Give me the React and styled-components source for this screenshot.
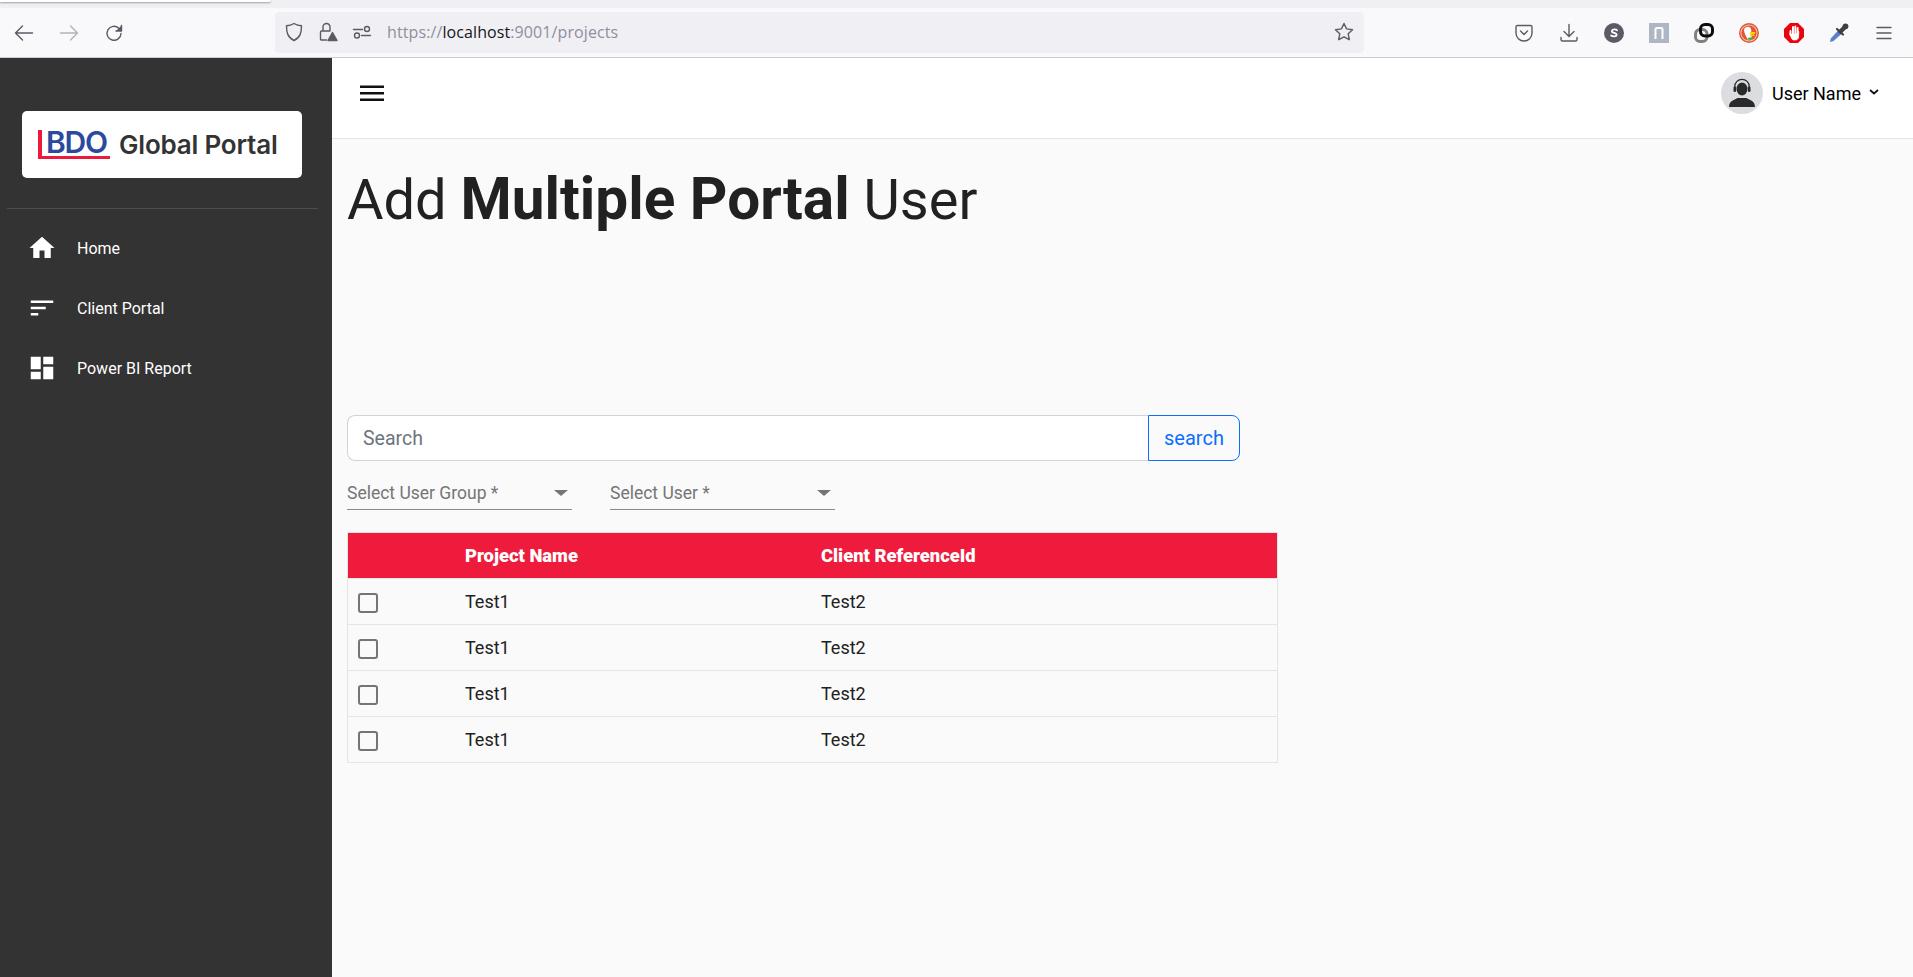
import React from 'react';
import styled, { createGlobalStyle } from 'styled-components';

const Global = createGlobalStyle`
  html, body { margin: 0; padding: 0; height: 100%; background: #fff; }
  body { font-family: Roboto, "Liberation Sans", sans-serif; }
  * { box-sizing: border-box; }
`;

const Page = styled.div`
  display: flex; flex-direction: column; width: 1913px; height: 977px; overflow: hidden;
`;

/* ---- browser chrome ---- */
const TabStrip = styled.div`
  height: 8px; background: #f0f0f4; flex: none;
`;
const TabSliver = styled.div`
  width: 271px; height: 2px; background: #fff; box-shadow: 0 1px 2px rgba(0,0,0,.35); border-bottom-right-radius: 3px;
`;
const Toolbar = styled.div`
  display: flex; align-items: center; height: 50px; flex: none; background: #f9f9fb;
  border-bottom: 1px solid #ccc;
`;
const NavButtons = styled.div`
  display: flex; align-items: center; gap: 25px; width: 275px; padding-left: 14px;
`;
const UrlBar = styled.div`
  display: flex; align-items: center; width: 1089px; height: 41px; background: #f0f0f4;
  border-radius: 4px; padding: 0 10px 0 9px; margin-top: -1px;
`;
const UrlIcons = styled.div`
  display: flex; align-items: center; gap: 14px; margin-right: 15px;
`;
const UrlText = styled.div`
  flex: 1; font-family: "Open Sans", "Noto Sans", sans-serif; font-size: 16px; letter-spacing: .1px; color: #8f8f9d;
`;
const Host = styled.span`color: #15141a;`;
const Extensions = styled.div`
  display: flex; align-items: center; gap: 25px; margin-left: 150px;
`;
const Glyph = styled.svg`
  display: block; flex: none; width: 20px; height: 20px;
  fill: none; stroke: ${p => p.$dim ? '#b3b3b8' : '#5b5b66'}; stroke-width: 1.4; stroke-linecap: round; stroke-linejoin: round;
`;

/* ---- app shell ---- */
const Shell = styled.div`
  flex: 1; display: flex; min-height: 0;
`;
const Sidebar = styled.aside`
  width: 332px; flex: none; background: #333; display: flex; flex-direction: column; padding: 53px 14px 0 7px;
`;
const LogoCard = styled.div`
  width: 280px; height: 67px; margin-left: 15px; background: #fff; border-radius: 5px;
  display: flex; align-items: center; padding-left: 16px; gap: 9px;
`;
const LogoMark = styled.div`
  height: 29px; width: 72px; padding-left: 4px; flex: none;
  font-family: Inter, "Liberation Sans", sans-serif; font-weight: 600; font-size: 30px; line-height: 25px; color: #2a4a9e; letter-spacing: -1.2px;
  border-left: 4px solid #ed1a3b; border-bottom: 3px solid #ed1a3b;
`;
const LogoText = styled.div`
  font-family: Inter, "Liberation Sans", sans-serif; font-weight: 600; font-size: 26px; color: #333; letter-spacing: -0.2px; white-space: nowrap;
`;
const Divider = styled.hr`
  margin: 30px 0 0; border: 0; border-top: 1px solid #4d4d4d;
`;
const Nav = styled.nav`
  display: flex; flex-direction: column; padding: 9px 0 0 20px;
`;
const NavItem = styled.a`
  display: flex; align-items: center; height: 60px; color: #fff; font-size: 16px; gap: 20px;
`;
const NavIcon = styled.svg`
  width: 30px; height: 30px; fill: #fff; flex: none;
`;
const Main = styled.main`
  flex: 1; display: flex; flex-direction: column; min-width: 0; background: #fafafa;
`;
const Topbar = styled.header`
  height: 81px; flex: none; background: #fff; border-bottom: 1px solid #e4e4e4;
  display: flex; align-items: center; justify-content: space-between; padding: 0 33px 10px 28px;
`;
const Burger = styled.svg`
  width: 24px; height: 24px; display: block;
`;
const UserBox = styled.div`
  display: flex; align-items: center; gap: 9px; font-size: 18px; color: #000;
`;
const Avatar = styled.div`
  width: 42px; height: 42px; border-radius: 50%; background: #dcdde0; overflow: hidden; display: flex; align-items: center; justify-content: center;
`;
const Chevron = styled.svg`
  width: 12px; height: 12px; margin: -3px 0 0 -2px;
`;
const Content = styled.div`
  flex: 1; padding: 26px 0 0 15px;
`;
const Title = styled.h1`
  margin: 0; font-size: 56px; font-weight: 400; line-height: 68px; color: #212121;
  b { font-weight: 700; font-size: 58.5px; }
`;
const SearchRow = styled.div`
  display: flex; width: 893px; height: 46px; margin-top: 181px;
`;
const SearchInput = styled.div`
  flex: 1; background: #fff; border: 1px solid #ced4da; border-right: 0; border-radius: 8px 0 0 8px;
  font-size: 19.5px; color: #6c757d; padding-left: 15px; display: flex; align-items: center;
`;
const SearchButton = styled.button`
  width: 92px; background: transparent; border: 1px solid #0d6efd; border-radius: 0 8px 8px 0;
  color: #0d6efd; font: 400 20px Roboto, sans-serif; padding: 0;
`;
const Filters = styled.div`
  display: flex; gap: 38px; margin-top: 13px;
`;
const SelectBox = styled.div`
  display: flex; align-items: center; justify-content: space-between; width: 225px; height: 36px;
  border-bottom: 1px solid #8a8a8a; font-size: 17.5px; color: #757575; padding: 3px 4px 0 0;
`;
const Caret = styled.span`
  width: 0; height: 0; border-left: 7px solid transparent; border-right: 7px solid transparent; border-top: 6px solid #757575;
`;
const Table = styled.div`
  width: 931px; margin-top: 22px; border: 1px solid #e5e5e5;
`;
const Row = styled.div`
  display: grid; grid-template-columns: 117px 356px 1fr; align-items: center; height: 46px; font-size: 18px; color: #212121;
  border-top: 1px solid #e5e5e5;
  &:first-child { border-top: 0; }
`;
const HeadRow = styled(Row)`
  height: 45px; background: #ef1b3c; color: #fff; font-weight: 900; font-size: 18.4px;
`;
const Check = styled.span`
  display: block; width: 20px; height: 20px; margin: 2px 0 0 10px; border: 2px solid #757575; border-radius: 3px;
`;

const items = [
  ['Home', 'M10 20v-6h4v6h5v-8h3L12 3 2 12h3v8z'],
  ['Client Portal', 'M3 18h6v-2H3v2zM3 6v2h18V6H3zm0 7h12v-2H3v2z'],
  ['Power BI Report', 'M3 13h8V3H3v10zm0 8h8v-6H3v6zm10 0h8V11h-8v10zm0-18v6h8V3h-8z'],
];

export default function App() {
  return (
    <Page>
      <Global />
      <TabStrip><TabSliver /></TabStrip>
      <Toolbar>
        <NavButtons>
          <Glyph viewBox="0 0 20 20"><path d="M18.500 10H1.500M8.500 3L1.500 10l7 7" /></Glyph>
          <Glyph $dim viewBox="0 0 20 20"><path d="M1.500 10h17M11.500 3l7 7-7 7" /></Glyph>
          <Glyph viewBox="0 0 20 20"><path d="M17 10.500a7 7 0 1 1-2.200-5.300L17 7.500" /><path d="M17.500 2.500v5.500h-5.500" fill="#5b5b66" /></Glyph>
        </NavButtons>
        <UrlBar>
          <UrlIcons>
            <Glyph viewBox="0 0 20 20"><path d="M10 1.500c2.500 1.500 4.500 2.100 7.500 2.300 0 6.500-1 11.500-7.500 14.700C3.500 15.300 2.500 10.300 2.500 3.800 5.500 3.600 7.500 3 10 1.500z" /></Glyph>
            <Glyph viewBox="0 0 20 20"><path d="M5 9V5a3.500 3.500 0 0 1 7 0v4M8.500 18H3.500a1 1 0 0 1-1-1V10a1 1 0 0 1 1-1H11" /><path d="M14.500 10.500l4.500 8h-9z" fill="#5b5b66" /></Glyph>
            <Glyph viewBox="0 0 20 20"><path d="M1.500 7.500h9M9.500 13.500h9" /><circle cx="15" cy="7" r="2.500" /><circle cx="5" cy="13.500" r="2.500" /></Glyph>
          </UrlIcons>
          <UrlText>https://<Host>localhost</Host>:9001/projects</UrlText>
          <Glyph viewBox="0 0 20 20"><path d="M10 1.500l2.600 5.400 5.900.8-4.300 4.100 1.100 5.900-5.300-2.900-5.300 2.900 1.100-5.900-4.300-4.100 5.900-.8z" /></Glyph>
        </UrlBar>
        <Extensions>
          <Glyph viewBox="0 0 20 20"><path d="M3.500 2.500h13a1.500 1.500 0 0 1 1.500 1.500v6a8 8 0 0 1-16 0V4a1.500 1.500 0 0 1 1.500-1.500z" /><path d="M6.500 8l3.500 3.500L13.500 8" /></Glyph>
          <Glyph viewBox="0 0 20 20"><path d="M10 1.500V13M5 8.500l5 5 5-5M2 14.500v2c0 .9.6 1.500 1.500 1.500h13c.9 0 1.500-.6 1.500-1.500v-2" /></Glyph>
          <Glyph viewBox="0 0 20 20"><circle cx="10" cy="10" r="10" fill="#5b5b66" stroke="none" /><path d="M13 7.200c-.8-1-4.800-1.400-5.200.8-.3 2.200 5 1.500 4.800 3.900-.2 2-4.300 1.700-5.400.6" stroke="#fff" strokeWidth="1.800" /></Glyph>
          <Glyph viewBox="0 0 20 20"><rect width="20" height="20" fill="#aeb6c3" stroke="none" /><path d="M6.500 16V6.500q0-1.500 1.500-1.500h4q1.500 0 1.500 1.500V16" stroke="#fff" strokeWidth="2" strokeLinecap="butt" /></Glyph>
          <Glyph viewBox="0 0 20 20"><rect x="1.500" y="6.500" width="11.500" height="12" rx="4.500" stroke="#808080" strokeWidth="3" /><rect x="6.500" y="1.500" width="12" height="11.500" rx="4.500" stroke="#0c0c0c" strokeWidth="3" /></Glyph>
          <Glyph viewBox="0 0 20 20"><circle cx="10" cy="10" r="10" fill="#de5833" stroke="none" /><circle cx="10" cy="10" r="8.600" fill="#f7c6b6" stroke="none" /><circle cx="10" cy="10" r="7.600" fill="#de5833" stroke="none" /><path d="M5 7c.5-3.500 6-4.500 7-1 .5 2 .2 3 .2 5l.8 5-4 1.200C7.500 14 5 10 5 7z" fill="#fff" stroke="none" /><path d="M11 9h5.500l-1 2H11zm0 2.500h4.500v1.500H11z" fill="#fdd20a" stroke="none" /><path d="M8.500 15l4.500-1v2.700l-3.500.6z" fill="#4cba3c" stroke="none" /></Glyph>
          <Glyph viewBox="0 0 20 20"><path d="M6 0h8l6 6v8l-6 6H6l-6-6V6z" fill="#e8050f" stroke="none" /><path d="M6.500 12V8M9 11V4M11.300 11V3.500M13.600 11V5" stroke="#fff" strokeWidth="1.900" /><path d="M5.700 10.500l1.800 5 1.500 1.500h3.500l2-2 .4-6.500-.8-.2-1.600 2.700H7z" fill="#fff" stroke="#fff" strokeWidth=".6" /></Glyph>
          <Glyph viewBox="0 0 20 20"><path d="M9.500 7L1.800 15.500 1 19l3.500-1L13 10.500z" fill="#5b7fc9" stroke="none" /><path d="M8 6l6 5.500" stroke="#3e3e46" strokeWidth="2.200" /><path d="M11.500 8.500l4-4" stroke="#3e3e46" strokeWidth="4.500" /><circle cx="16.500" cy="3.300" r="2.900" fill="#3e3e46" stroke="none" /></Glyph>
          <Glyph viewBox="0 0 20 20"><path d="M3 4.500h14M3 10h14M3 15.500h14" /></Glyph>
        </Extensions>
      </Toolbar>
      <Shell>
        <Sidebar>
          <LogoCard>
            <LogoMark>BDO</LogoMark>
            <LogoText>Global Portal</LogoText>
          </LogoCard>
          <Divider />
          <Nav>
            {items.map(([label, d]) => (
              <NavItem key={label}>
                <NavIcon viewBox="0 0 24 24"><path d={d} /></NavIcon>
                {label}
              </NavItem>
            ))}
          </Nav>
        </Sidebar>
        <Main>
          <Topbar>
            <Burger viewBox="0 0 24 24"><path d="M0 4.500h24v2.500H0zM0 11h24v2.500H0zM0 17.500h24V20H0z" fill="#111" /></Burger>
            <UserBox>
              <Avatar>
                <svg width="26" height="30" viewBox="0 0 26 30">
                  <ellipse cx="13" cy="11" rx="5.500" ry="6.500" fill="#2a2a2a" />
                  <path d="M5.800 11V8.500a7.200 7.200 0 0 1 14.400 0V11" fill="none" stroke="#2a2a2a" strokeWidth="1.300" />
                  <rect x="4.500" y="8.500" width="2.600" height="5.500" rx="1.300" fill="#2a2a2a" />
                  <rect x="18.900" y="8.500" width="2.600" height="5.500" rx="1.300" fill="#2a2a2a" />
                  <path d="M0 29c0-6 5-7 8.500-9h9c3.500 2 8.500 3 8.500 9z" fill="#2a2a2a" />
                </svg>
              </Avatar>
              User Name
              <Chevron viewBox="0 0 12 12"><path d="M2 4l4 3.500L10 4" fill="none" stroke="#111" strokeWidth="1.700" /></Chevron>
            </UserBox>
          </Topbar>
          <Content>
            <Title>Add <b>Multiple Portal</b> User</Title>
            <SearchRow>
              <SearchInput>Search</SearchInput>
              <SearchButton>search</SearchButton>
            </SearchRow>
            <Filters>
              <SelectBox>Select User Group *<Caret /></SelectBox>
              <SelectBox>Select User *<Caret /></SelectBox>
            </Filters>
            <Table>
              <HeadRow><span /><span>Project Name</span><span>Client ReferenceId</span></HeadRow>
              {[0, 1, 2, 3].map(i => (
                <Row key={i}><Check /><span>Test1</span><span>Test2</span></Row>
              ))}
            </Table>
          </Content>
        </Main>
      </Shell>
    </Page>
  );
}
